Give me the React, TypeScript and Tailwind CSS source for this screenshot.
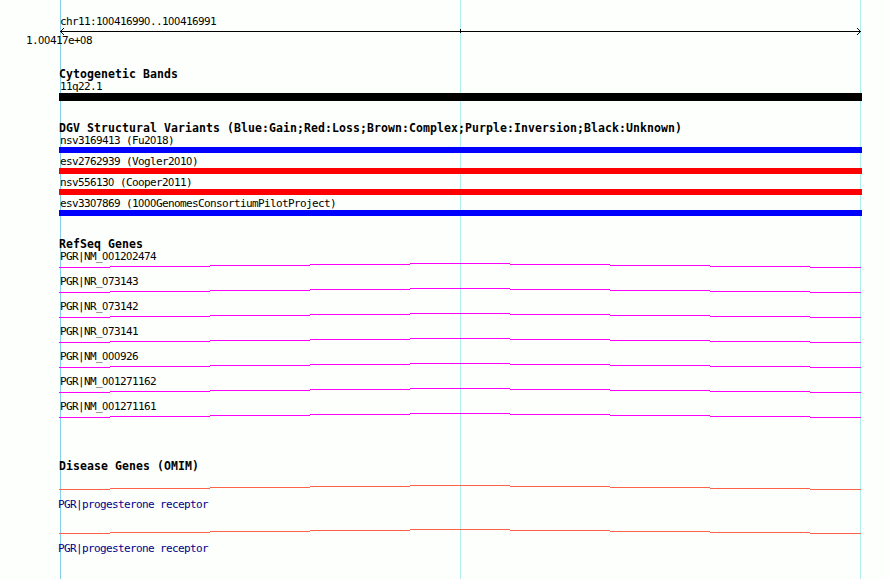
import React from "react";

// Plain zeros: the monospaced face draws a dot inside its own.
function Label({ text, className = "" }: { text: string; className?: string }) {
  return (
    <div
      className={`h-[13px] whitespace-pre font-['DejaVu_Sans_Mono',monospace] text-[11px] leading-[13px] tracking-[-0.622px] ${className}`}
    >
      {text.split(/(0+)/).map((part, i) =>
        part.startsWith("0") ? (
          <span key={i} className="font-['DejaVu_Sans_Condensed','DejaVu_Sans',sans-serif] tracking-[-0.3px] [font-stretch:condensed]">
            {part}
          </span>
        ) : (
          part
        ),
      )}
    </div>
  );
}

function Heading({ text }: { text: string }) {
  return (
    <h2 className="-ml-px h-[13px] whitespace-pre font-['DejaVu_Sans_Mono',monospace] text-[11.5px] font-bold leading-[14px] tracking-[0.077px]">
      {text}
    </h2>
  );
}

function Bar({ className }: { className: string }) {
  return <div className={`-ml-px w-[803px] ${className}`} />;
}

const steps = [
  "w-[51px] mt-[4px]",
  "w-[100px] mt-[3px]",
  "w-[100px] mt-[2px]",
  "w-[100px] mt-[1px]",
  "w-[100px] mt-0",
  "w-[100px] mt-[1px]",
  "w-[100px] mt-[2px]",
  "w-[100px] mt-[3px]",
  "w-[51px] mt-[4px]",
];

function Intron({ color }: { color: string }) {
  return (
    <div className="-ml-px flex h-[5px] w-[802px]">
      {steps.map((step, i) => (
        <div key={i} className={`h-px shrink-0 ${step} ${color}`} />
      ))}
    </div>
  );
}

function Axis() {
  return (
    <svg className="block h-[6px] w-[802px] overflow-visible" viewBox="0 0 802 6" shapeRendering="crispEdges">
      <path d="M0 3h801v1h-801zM400 1h1v4h-1z" />
      <path d="M1 2h1v1h-1zM2 1h1v1h-1zM3 0h1v1h-1zM1 4h1v1h-1zM2 5h1v1h-1zM3 6h1v1h-1z" />
      <path d="M799 2h1v1h-1zM798 1h1v1h-1zM797 0h1v1h-1zM799 4h1v1h-1zM798 5h1v1h-1zM797 6h1v1h-1z" />
    </svg>
  );
}

const variants = [
  { name: "nsv3169413 (Fu2018)", color: "bg-[#0000ff]" },
  { name: "esv2762939 (Vogler2010)", color: "bg-[#ff0000]" },
  { name: "nsv556130 (Cooper2011)", color: "bg-[#ff0000]" },
  { name: "esv3307869 (1000GenomesConsortiumPilotProject)", color: "bg-[#0000ff]" },
];

const genes = ["NM_001202474", "NR_073143", "NR_073142", "NR_073141", "NM_000926", "NM_001271162", "NM_001271161"];

export default function App() {
  return (
    <main className="relative h-[579px] w-[890px] overflow-hidden bg-[#fcfffc] text-black">
      <div className="absolute inset-y-0 left-[60px] w-px bg-[#87ceeb]" />
      <div className="absolute inset-y-0 left-[460px] w-px bg-[#afeeee]" />
      <div className="absolute inset-y-0 left-[860px] w-px bg-[#afeeee]" />

      <div className="relative flex flex-col pl-[60px] pt-[15px]">
        <Label text="chr11:100416990..100416991" />
        <Axis />
        <Label text="1.00417e+08" className="-ml-[34px]" />

        <section className="mt-5">
          <Heading text="Cytogenetic Bands" />
          <Label text="11q22.1" />
          <Bar className="h-2 bg-black" />
        </section>

        <section className="mt-5">
          <Heading text="DGV Structural Variants (Blue:Gain;Red:Loss;Brown:Complex;Purple:Inversion;Black:Unknown)" />
          <div className="flex flex-col gap-0.5">
            {variants.map((v) => (
              <div key={v.name}>
                <Label text={v.name} />
                <Bar className={`h-1.5 ${v.color}`} />
              </div>
            ))}
          </div>
        </section>

        <section className="mt-[21px]">
          <Heading text="RefSeq Genes" />
          <div className="flex flex-col gap-[7px]">
            {genes.map((g) => (
              <div key={g}>
                <Label text={`PGR|${g}`} />
                <Intron color="bg-[#ff00ff]" />
              </div>
            ))}
          </div>
        </section>

        <section className="mt-[41px]">
          <Heading text="Disease Genes (OMIM)" />
          <div className="mt-[13px] flex flex-col gap-[18px]">
            {[0, 1].map((i) => (
              <div key={i} className="flex flex-col gap-2">
                <Intron color="bg-[#ff6347]" />
                <Label text="PGR|progesterone receptor" className="-ml-0.5 text-[#00008b]" />
              </div>
            ))}
          </div>
        </section>
      </div>
    </main>
  );
}
